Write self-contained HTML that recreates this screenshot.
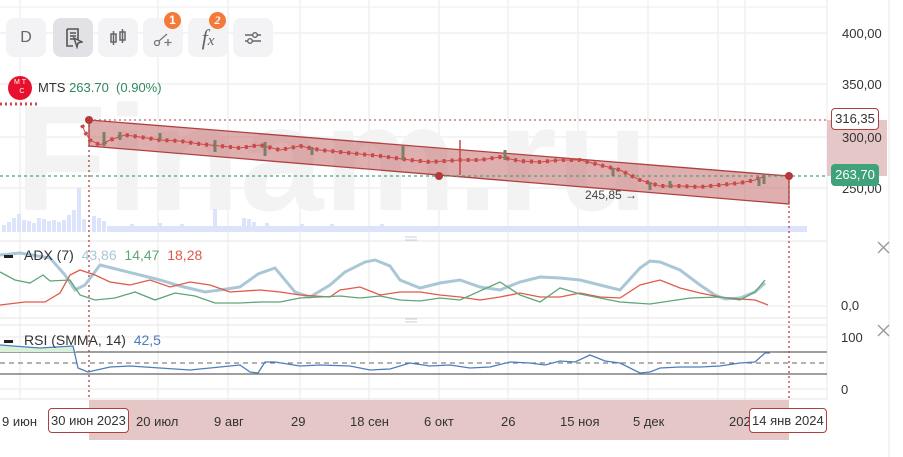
<!DOCTYPE html>
<html><head><meta charset="utf-8"><style>
body{margin:0;width:903px;height:457px;overflow:hidden;background:#fff;font-family:"Liberation Sans",sans-serif;position:relative}
.btn{position:absolute;top:18px;width:40px;height:39px;border-radius:8px;background:#f3f3f5;display:flex;align-items:center;justify-content:center;color:#666}
.badge{position:absolute;top:-6px;right:2px;width:17px;height:17px;border-radius:50%;background:#f47a3a;color:#fff;font-size:12px;font-weight:bold;text-align:center;line-height:17px}
.ax{position:absolute;font-size:13px;color:#333}
.t{position:absolute;top:414px;font-size:13px;color:#333}
</style></head><body>
<svg width="903" height="457" style="position:absolute;left:0;top:0">
<g stroke="#f0f0f0" stroke-width="1.5">
<line x1="20" y1="0" x2="20" y2="400"/><line x1="158" y1="0" x2="158" y2="400"/><line x1="228" y1="0" x2="228" y2="400"/><line x1="300" y1="0" x2="300" y2="400"/><line x1="369" y1="0" x2="369" y2="400"/><line x1="439" y1="0" x2="439" y2="400"/><line x1="508" y1="0" x2="508" y2="400"/><line x1="578" y1="0" x2="578" y2="400"/><line x1="648" y1="0" x2="648" y2="400"/><line x1="718" y1="0" x2="718" y2="400"/><line x1="745" y1="0" x2="745" y2="400"/>
<line x1="0" y1="33" x2="827" y2="33"/><line x1="0" y1="84" x2="827" y2="84"/><line x1="0" y1="137" x2="827" y2="137"/><line x1="0" y1="188" x2="827" y2="188"/>
<line x1="0" y1="306" x2="827" y2="306"/><line x1="0" y1="337" x2="827" y2="337"/><line x1="0" y1="389" x2="827" y2="389"/>
</g>
<line x1="0" y1="7" x2="827" y2="7" stroke="#eee"/>
<line x1="827" y1="0" x2="827" y2="400" stroke="#e8e8e8"/>
<line x1="889" y1="0" x2="889" y2="457" stroke="#e8e8e8"/>
<line x1="0" y1="241" x2="827" y2="241" stroke="#e6e6e6"/>
<line x1="0" y1="318" x2="827" y2="318" stroke="#e6e6e6"/>
<line x1="0" y1="325" x2="827" y2="325" stroke="#e6e6e6"/>
<line x1="0" y1="399" x2="827" y2="399" stroke="#e6e6e6"/>
<text x="15" y="210" font-family="Liberation Sans" font-weight="bold" font-size="150" fill="#f3f3f3">Finam.ru</text>
<!-- volume -->
<polyline fill="none" stroke="#dde3fb" stroke-width="4" stroke-dasharray="4,1" points="0,232 0,232"/>
<g fill="#dde3fb">
<rect x="2" y="225" width="4" height="7"/><rect x="7" y="222" width="4" height="10"/><rect x="12" y="218" width="4" height="14"/><rect x="17" y="214" width="4" height="18"/><rect x="22" y="220" width="4" height="12"/><rect x="27" y="221" width="4" height="11"/><rect x="32" y="223" width="4" height="9"/><rect x="37" y="218" width="4" height="14"/><rect x="42" y="219" width="4" height="13"/><rect x="47" y="221" width="4" height="11"/><rect x="52" y="220" width="4" height="12"/><rect x="57" y="222" width="4" height="10"/>
<rect x="62" y="220" width="4" height="12"/><rect x="67" y="215" width="4" height="17"/><rect x="72" y="210" width="4" height="22"/><rect x="77" y="188" width="4" height="44"/><rect x="82" y="219" width="4" height="13"/><rect x="92" y="216" width="4" height="16"/><rect x="97" y="218" width="4" height="14"/><rect x="102" y="221" width="4" height="11"/>
<rect x="107" y="226" width="700" height="6"/>
<rect x="130" y="224" width="4" height="8"/><rect x="158" y="223" width="4" height="9"/><rect x="180" y="224" width="4" height="8"/><rect x="213" y="209" width="4" height="23"/><rect x="242" y="218" width="4" height="14"/><rect x="247" y="219" width="4" height="13"/><rect x="252" y="222" width="4" height="10"/><rect x="265" y="223" width="4" height="9"/><rect x="300" y="224" width="4" height="8"/><rect x="330" y="224" width="4" height="8"/><rect x="380" y="224" width="4" height="8"/>
</g>
<polygon points="89,120 789,176 789,204 89,146" fill="#c97a7a" fill-opacity="0.6" stroke="#b04040" stroke-width="1.3"/>
<line x1="89" y1="120" x2="827" y2="120" stroke="#c06060" stroke-dasharray="2,3" stroke-width="1.3"/>
<line x1="0" y1="176" x2="827" y2="176" stroke="#4aa07a" stroke-dasharray="3,3" stroke-width="1.3"/>
<line x1="89" y1="120" x2="89" y2="400" stroke="#b04040" stroke-dasharray="2,3" stroke-width="1.3"/>
<line x1="789" y1="176" x2="789" y2="400" stroke="#b04040" stroke-dasharray="2,3" stroke-width="1.3"/>
<circle cx="89" cy="120" r="4" fill="#b23a3a"/><circle cx="439" cy="176" r="4" fill="#b23a3a"/><circle cx="789" cy="176" r="4" fill="#b23a3a"/>
<!-- candles -->
<polyline fill="none" stroke="#d04848" stroke-width="1" points="82,125 85,132 90,140 100,145 110,140 125,135 140,137 160,140 180,141 200,144 220,146 240,148 260,145 280,150 300,146 320,150 350,153 380,156 410,160 430,162 460,160 480,160 500,157 520,161 540,162 560,160 580,160 600,165 620,170 640,180 660,186 680,186 700,187 720,185 740,183 755,180 765,176"/>
<polyline fill="none" stroke="#c94848" stroke-width="4" stroke-dasharray="3,5" points="82,125 85,132 90,140 100,145 110,140 125,135 140,137 160,140 180,141 200,144 220,146 240,148 260,145 280,150 300,146 320,150 350,153 380,156 410,160 430,162 460,160 480,160 500,157 520,161 540,162 560,160 580,160 600,165 620,170 640,180 660,186 680,186 700,187 720,185 740,183 755,180 765,176"/>
<g stroke="#7a8068" stroke-width="3"><line x1="104" y1="132" x2="104" y2="146"/><line x1="120" y1="132" x2="120" y2="140"/><line x1="160" y1="133" x2="160" y2="140"/><line x1="215" y1="140" x2="215" y2="152"/><line x1="265" y1="142" x2="265" y2="156"/><line x1="312" y1="147" x2="312" y2="155"/><line x1="403" y1="146" x2="403" y2="160"/><line x1="505" y1="150" x2="505" y2="160"/><line x1="613" y1="168" x2="613" y2="176"/><line x1="650" y1="182" x2="650" y2="190"/><line x1="670" y1="181" x2="670" y2="188"/><line x1="759" y1="178" x2="759" y2="186"/><line x1="764" y1="174" x2="764" y2="184"/></g>
<line x1="460" y1="140" x2="460" y2="175" stroke="#c94848" stroke-width="1.5"/>
<polyline fill="none" stroke="#d04848" stroke-width="3" stroke-dasharray="2,3" points="0,104 38,104"/>
<!-- ADX -->
<polyline fill="none" stroke="#a9c7d6" stroke-width="3" points="0,255 20,253 50,258 65,275 75,290 85,285 100,265 120,270 140,275 160,280 180,286 205,292 220,290 240,287 258,274 275,268 295,292 310,297 330,285 345,272 365,262 375,260 390,266 400,280 420,288 440,283 460,280 480,287 500,290 520,282 540,277 560,278 580,280 600,285 620,290 640,268 650,261 660,262 680,270 700,285 715,295 725,299 740,298 755,292 765,283"/>
<polyline fill="none" stroke="#e05a4a" stroke-width="1.3" points="0,305 25,302 45,302 60,293 70,275 80,270 95,275 110,282 130,285 150,280 170,287 190,282 210,285 230,292 260,290 280,292 300,295 330,297 340,290 360,287 380,295 400,292 420,292 440,295 460,297 480,300 500,297 520,293 540,297 560,297 580,293 600,297 620,298 640,285 660,280 680,288 700,293 720,297 740,299 755,300 768,305"/>
<polyline fill="none" stroke="#5fa57a" stroke-width="1.3" points="0,272 15,280 30,283 43,275 50,281 70,280 80,295 95,300 115,298 135,292 155,300 175,293 195,296 215,303 240,303 260,302 280,302 300,298 320,297 340,296 360,298 380,296 400,300 420,301 440,298 460,300 500,282 520,295 540,302 560,288 580,294 600,298 620,302 650,304 690,298 720,297 740,300 755,292 765,280"/>
<!-- RSI -->
<line x1="0" y1="352" x2="827" y2="352" stroke="#666" stroke-width="1.2"/>
<line x1="0" y1="363" x2="827" y2="363" stroke="#666" stroke-dasharray="5,4"/>
<line x1="0" y1="374" x2="827" y2="374" stroke="#666" stroke-width="1.2"/>
<polygon points="0,345 40,348 73,346 76,352 0,352" fill="#d8f0d8"/>
<polyline fill="none" stroke="#4e7dbd" stroke-width="1.3" points="0,345 40,348 73,346 78,368 88,372 110,367 130,366 160,368 190,370 220,367 240,365 250,372 258,373 265,362 275,362 300,366 320,365 350,366 370,370 390,369 410,363 430,366 450,365 470,368 490,367 510,362 530,363 545,365 560,361 575,362 590,355 605,361 620,363 640,373 650,372 660,368 680,367 700,367 720,366 740,363 755,362 765,353 770,353"/>
<rect x="89" y="400" width="700" height="40" fill="#e5c7c7"/>
<rect x="827" y="120" width="60" height="56" fill="#e5c7c7"/>
<g stroke="#ccd"><line x1="405" y1="237" x2="417" y2="237"/><line x1="405" y1="240" x2="417" y2="240"/><line x1="405" y1="319" x2="417" y2="319"/><line x1="405" y1="322" x2="417" y2="322"/></g>
<g stroke="#999" stroke-width="1.3"><line x1="878" y1="242" x2="889" y2="253"/><line x1="889" y1="242" x2="878" y2="253"/><line x1="878" y1="325" x2="889" y2="336"/><line x1="889" y1="325" x2="878" y2="336"/></g>
<text x="585" y="199" font-size="12" fill="#444" font-family="Liberation Sans">245,85 →</text>
</svg>
<div class="btn" style="left:6px;font-size:16px">D</div>
<div class="btn" style="left:53px;background:#e2e2e6"><svg width="20" height="22"><path d="M4 2h11v11M4 2v17h6M7 6h6M7 9h6M7 12h4" fill="none" stroke="#555" stroke-width="1.6"/><path d="M11 11l8 4-4 1-1 4z" fill="none" stroke="#555" stroke-width="1.5"/></svg></div>
<div class="btn" style="left:98px"><svg width="22" height="22"><rect x="4" y="7" width="5" height="8" fill="none" stroke="#666" stroke-width="1.5"/><line x1="6.5" y1="4" x2="6.5" y2="18" stroke="#666" stroke-width="1.5"/><rect x="13" y="5" width="5" height="8" fill="none" stroke="#666" stroke-width="1.5"/><line x1="15.5" y1="2" x2="15.5" y2="16" stroke="#666" stroke-width="1.5"/></svg></div>
<div class="btn" style="left:143px"><svg width="22" height="22"><circle cx="5" cy="16" r="2.5" fill="none" stroke="#777" stroke-width="1.3"/><line x1="7" y1="14" x2="15" y2="7" stroke="#777" stroke-width="1.3"/><path d="M16 12v7M12.5 15.5h7" stroke="#777" stroke-width="1.3"/></svg><div class="badge">1</div></div>
<div class="btn" style="left:188px;font-family:'Liberation Serif',serif;font-style:italic;font-size:22px">f<span style="font-size:15px;margin-top:8px">x</span><div class="badge">2</div></div>
<div class="btn" style="left:233px"><svg width="22" height="22"><path d="M3 8h16M3 14h16" stroke="#666" stroke-width="1.4"/><circle cx="13" cy="8" r="2.3" fill="#f3f3f5" stroke="#666" stroke-width="1.4"/><circle cx="8" cy="14" r="2.3" fill="#f3f3f5" stroke="#666" stroke-width="1.4"/></svg></div>
<div style="position:absolute;left:8px;top:76px;width:24px;height:24px;border-radius:50%;background:#e8112d;color:#fff;font-size:7px;line-height:9px;text-align:center;padding-top:2px;box-sizing:border-box">M&nbsp;T<br>&nbsp;&nbsp;C</div>
<div style="position:absolute;left:38px;top:80px;font-size:13px;color:#333">MTS <span style="color:#2e8a5e">263.70 &nbsp;(0.90%)</span></div>
<div style="position:absolute;left:4px;top:247px;font-size:14px;color:#333"><b style="display:inline-block;width:9px;height:3px;background:#222;vertical-align:middle;margin-right:11px"></b>ADX (7) &nbsp;<span style="color:#a9c7d6">43,86</span> &nbsp;<span style="color:#5fa57a">14,47</span> &nbsp;<span style="color:#e05a4a">18,28</span></div>
<div style="position:absolute;left:4px;top:332px;font-size:14px;color:#333"><b style="display:inline-block;width:9px;height:3px;background:#222;vertical-align:middle;margin-right:11px"></b>RSI (SMMA, 14) &nbsp;<span style="color:#4e7dbd">42,5</span></div>
<div class="ax" style="left:842px;top:26px">400,00</div>
<div class="ax" style="left:842px;top:77px">350,00</div>
<div class="ax" style="left:842px;top:130px">300,00</div>
<div class="ax" style="left:842px;top:181px">250,00</div>
<div class="ax" style="left:831px;top:108px;width:46px;height:20px;border:1px solid #b04040;border-radius:4px;background:#fff;text-align:center;line-height:20px">316,35</div>
<div class="ax" style="left:831px;top:164px;width:48px;height:22px;border-radius:4px;background:#3fa27a;color:#fff;text-align:center;line-height:22px">263,70</div>
<div class="ax" style="left:841px;top:298px">0,0</div>
<div class="ax" style="left:841px;top:330px">100</div>
<div class="ax" style="left:841px;top:382px">0</div>
<div class="t" style="left:2px">9 июн</div>
<div class="t" style="left:48px;top:408px;border:1px solid #b04040;border-radius:4px;padding:4px 2px;background:#fff">30 июн 2023</div>
<div class="t" style="left:136px">20 июл</div>
<div class="t" style="left:214px">9 авг</div>
<div class="t" style="left:291px">29</div>
<div class="t" style="left:350px">18 сен</div>
<div class="t" style="left:424px">6 окт</div>
<div class="t" style="left:501px">26</div>
<div class="t" style="left:560px">15 ноя</div>
<div class="t" style="left:633px">5 дек</div>
<div class="t" style="left:729px">202</div>
<div class="t" style="left:749px;top:408px;border:1px solid #b04040;border-radius:4px;padding:4px 2px;background:#fff">14 янв 2024</div>
</body></html>
